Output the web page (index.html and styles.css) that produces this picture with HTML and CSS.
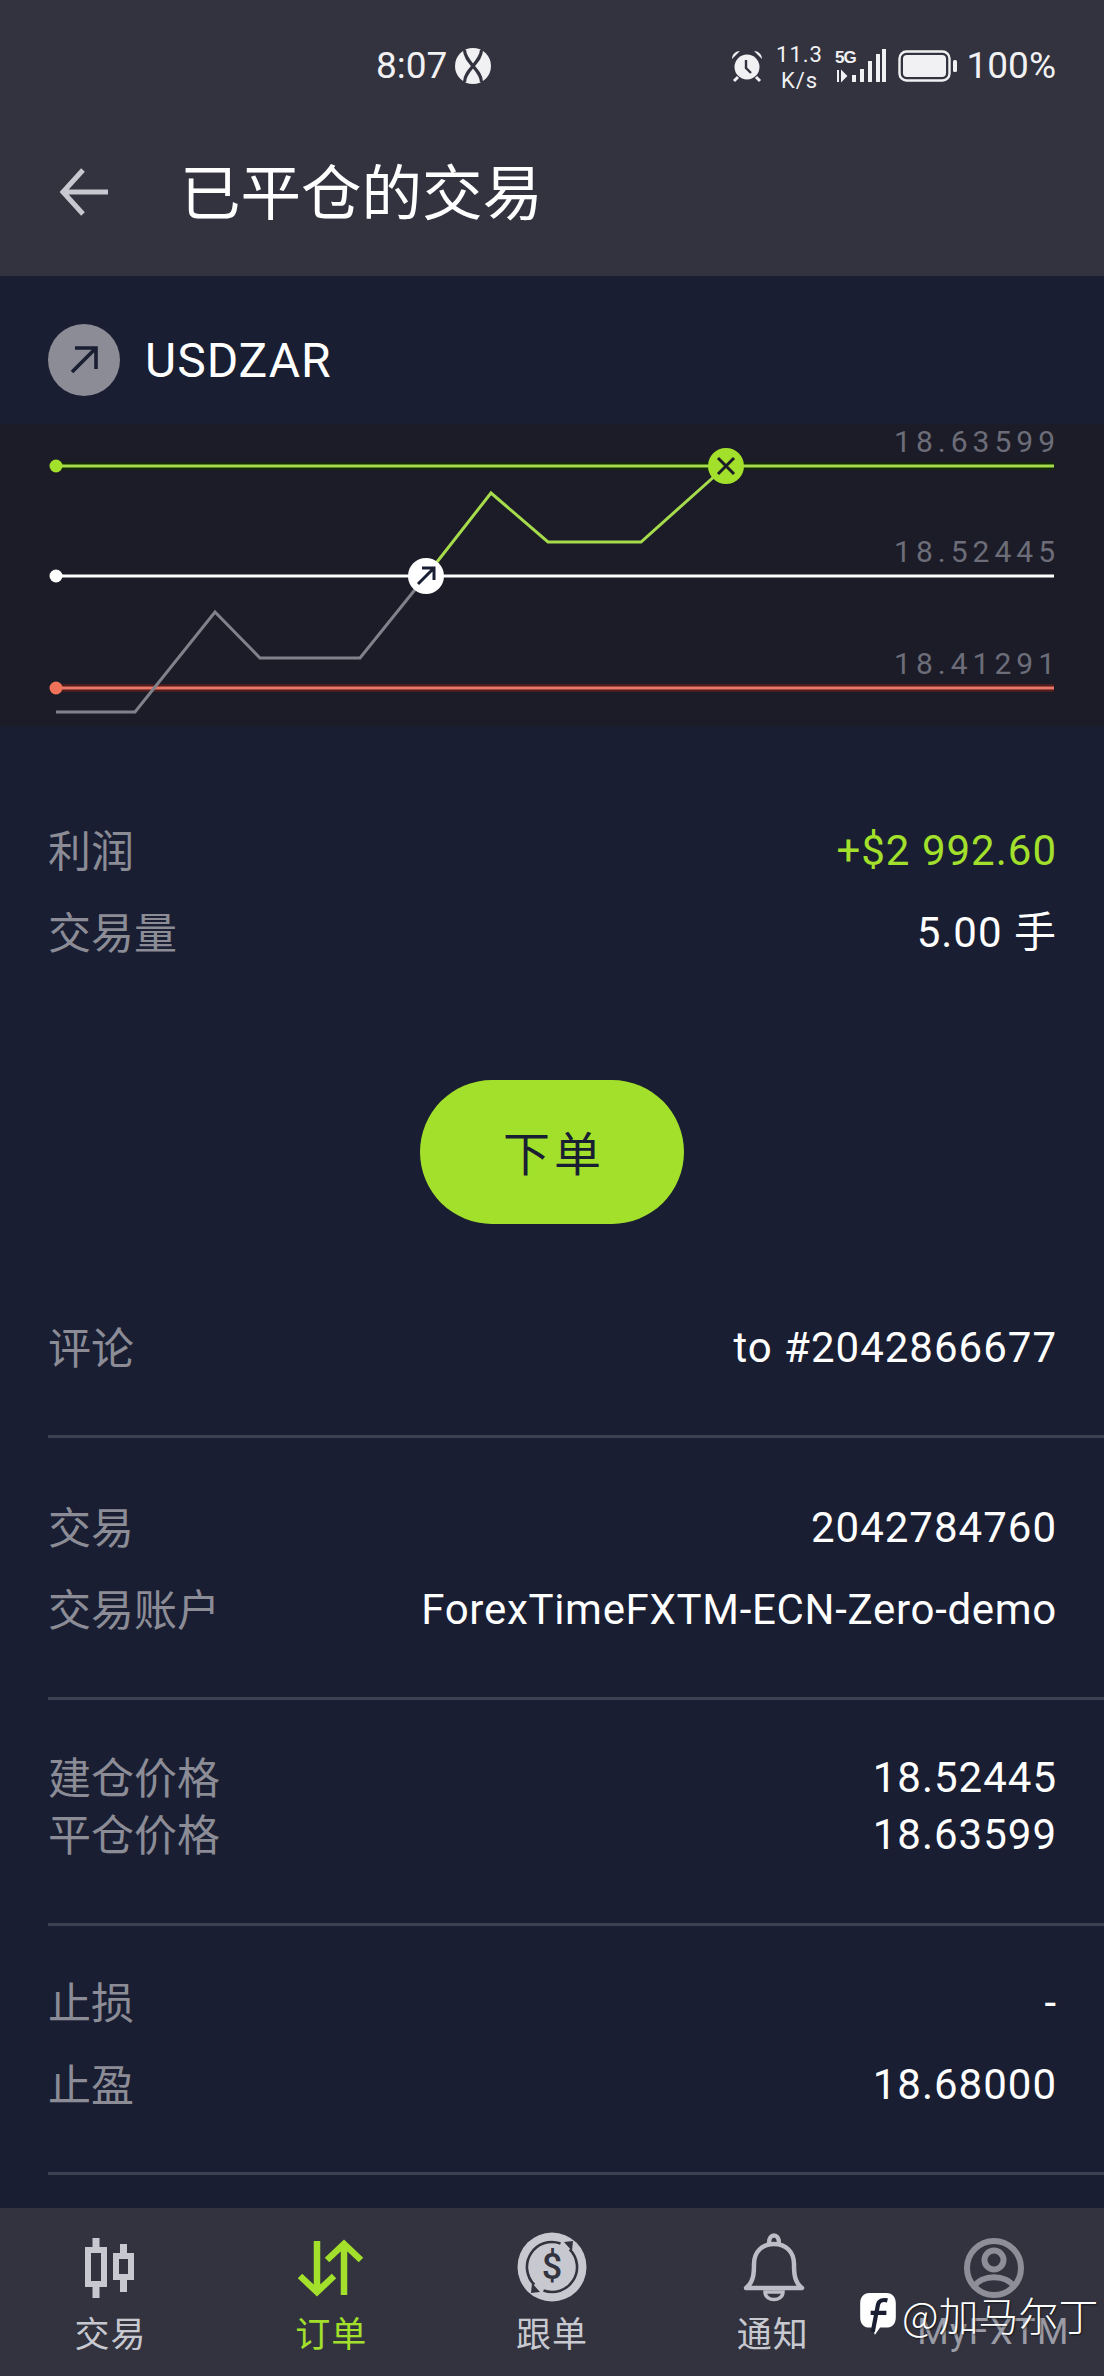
FILE: index.html
```html
<!DOCTYPE html>
<html lang="zh-CN">
<head>
<meta charset="utf-8">
<title>已平仓的交易</title>
<link rel="stylesheet" href="styles.css">
</head>
<body>
<div class="app">
  <header class="topbar">
    <div class="status">
      <div class="status-center">
        <span class="time">8:07</span>
        <svg class="status-logo" viewBox="0 0 34 34"><circle cx="17" cy="17" r="17" fill="#f1f1f3"/><path d="M9 2C9 13 25 21 25 32M25 2C25 13 9 21 9 32" fill="none" stroke="#32333f" stroke-width="3"/></svg>
      </div>
      <div class="status-right">
        <svg class="alarm" viewBox="0 0 34 34"><circle cx="17" cy="18" r="12.5" fill="#f1f1f3"/><path d="M2 10C2 5 6 2 10 2ZM32 10C32 5 28 2 24 2Z" fill="#f1f1f3"/><path d="M8 28L4 32M26 28L30 32" stroke="#f1f1f3" stroke-width="3"/><path d="M16 11V19L21 24" fill="none" stroke="#32333f" stroke-width="2.4"/></svg>
        <div class="speed"><span>11.3</span><span>K/s</span></div>
        <svg class="signal" viewBox="0 0 52 36">
          <text class="net" x="0" y="15">5G</text>
          <path d="M3 22V34M7 24L11 28L7 32Z" stroke="#f1f1f3" stroke-width="2" fill="#f1f1f3"/>
          <path d="M17 27H21V34H17ZM25 21H29V34H25ZM33 13H37V34H33ZM41 6H45V34H41Z" fill="#f1f1f3"/>
          <rect x="47" y="1" width="4" height="33" fill="#f1f1f3"/>
        </svg>
        <svg class="battery" viewBox="0 0 60 32"><rect x="1.5" y="1.5" width="50" height="29" rx="7" fill="none" stroke="#f1f1f3" stroke-width="2.4"/><rect x="5" y="5" width="43" height="22" rx="4" fill="#f1f1f3"/><rect x="55" y="10" width="4" height="12" rx="1.5" fill="#f1f1f3"/></svg>
        <span class="pct">100%</span>
      </div>
    </div>
    <div class="titlebar">
      <svg class="back" viewBox="0 0 50 50"><path d="M49 25H5M24 3L4 25L24 47" fill="none" stroke="#c8c9d0" stroke-width="5"/></svg>
      <h1 class="title">已平仓的交易</h1>
    </div>
  </header>

  <main class="content">
    <div class="symbol">
      <span class="badge"><svg viewBox="0 0 72 72"><path d="M24 48L48 24M27 24H48V45" fill="none" stroke="#191e32" stroke-width="3.6"/></svg></span>
      <span class="symbol-name">USDZAR</span>
    </div>

    <svg class="chart" viewBox="0 0 1104 303">
      <rect width="1104" height="303" fill="#1b1c27"/>
      <text class="lvl" x="1060" y="28" text-anchor="end">18.63599</text>
      <text class="lvl" x="1060" y="138" text-anchor="end">18.52445</text>
      <text class="lvl" x="1060" y="250" text-anchor="end">18.41291</text>
      <path d="M56 42H1054" stroke="#14280c" stroke-width="8"/>
      <path d="M56 42H1054" stroke="#a6dc4c" stroke-width="3"/>
      <path d="M56 152H1054" stroke="#fff" stroke-width="3"/>
      <path d="M56 264H1054" stroke="#4a1d1e" stroke-width="8"/>
      <path d="M56 264H1054" stroke="#ea7766" stroke-width="3"/>
      <circle cx="56" cy="42" r="6.5" fill="#a3e02c"/>
      <circle cx="56" cy="152" r="6.5" fill="#fff"/>
      <circle cx="56" cy="264" r="6.5" fill="#ef7259"/>
      <path d="M56 288H135L215 188L260 234H360L426 152" fill="none" stroke="#80818b" stroke-width="3"/>
      <path d="M426 152L491 69L548 118H641L726 42" fill="none" stroke="#a6dc4c" stroke-width="3"/>
      <circle cx="426" cy="152" r="18" fill="#fff"/>
      <path d="M418 160L433 145M422 144H434V156" fill="none" stroke="#191e32" stroke-width="3"/>
      <circle cx="726" cy="42" r="18" fill="#a3e02c"/>
      <path d="M718 34L734 50M734 34L718 50" fill="none" stroke="#1b1c27" stroke-width="3"/>
    </svg>

    <section class="rows profit">
      <div class="row"><span class="key">利润</span><span class="val green">+$2 992.60</span></div>
      <div class="row"><span class="key">交易量</span><span class="val">5.00 手</span></div>
    </section>

    <div class="action"><button class="order">下单</button></div>

    <section class="rows comment">
      <div class="row"><span class="key">评论</span><span class="val">to #2042866677</span></div>
    </section>

    <section class="rows deal">
      <div class="row"><span class="key">交易</span><span class="val">2042784760</span></div>
      <div class="row"><span class="key">交易账户</span><span class="val tight">ForexTimeFXTM-ECN-Zero-demo</span></div>
    </section>

    <section class="rows prices">
      <div class="row"><span class="key">建仓价格</span><span class="val">18.52445</span></div>
      <div class="row"><span class="key">平仓价格</span><span class="val">18.63599</span></div>
    </section>

    <section class="rows stops">
      <div class="row"><span class="key">止损</span><span class="val">-</span></div>
      <div class="row"><span class="key">止盈</span><span class="val">18.68000</span></div>
    </section>
  </main>

  <nav class="tabbar">
    <div class="tab">
      <svg class="tab-icon" viewBox="0 0 70 70"><g fill="none" stroke="#c8c9d0"><path d="M21 6V18M21 52V66M48.500 12V24M48.500 45V60" stroke-width="7"/><rect x="13" y="18" width="16" height="34" stroke-width="6"/><rect x="41" y="24" width="15" height="21" stroke-width="6"/></g></svg>
      <span class="tab-label">交易</span>
    </div>
    <div class="tab active">
      <svg class="tab-icon" viewBox="0 0 70 70"><path d="M21 9V60M4 44L21 60L38 44M48 63V12M31 28L48 12L65 28" fill="none" stroke="#a3e02c" stroke-width="6.500"/></svg>
      <span class="tab-label">订单</span>
    </div>
    <div class="tab">
      <svg class="tab-icon" viewBox="0 0 70 70"><circle cx="35" cy="35" r="34.500" fill="#c8c9d0"/><path d="M43.500 11.500A25 25 0 0 0 17.300 52.700M26.500 58.500A25 25 0 0 0 52.700 17.300" fill="none" stroke="#32333f" stroke-width="2.600"/><path d="M47 10L56 9L55 19ZM23 60L14 61L15 51Z" fill="#32333f"/><text class="dollar" x="35" y="47" text-anchor="middle">$</text></svg>
      <span class="tab-label">跟单</span>
    </div>
    <div class="tab">
      <svg class="tab-icon" viewBox="0 0 70 70"><path d="M8 56C16 50 16 40 16 32C16 20 24 12 36 12C48 12 56 20 56 32C56 40 56 50 64 56ZM31 11C31 1 41 1 41 11" fill="none" stroke="#bcbdc6" stroke-width="4.500" stroke-linejoin="round"/><path d="M27 60H45C45 70 27 70 27 60Z" fill="none" stroke="#bcbdc6" stroke-width="3.500"/></svg>
      <span class="tab-label">通知</span>
    </div>
    <div class="tab">
      <svg class="tab-icon" viewBox="0 0 70 70"><g fill="none" stroke="#8d8e98" stroke-width="6"><circle cx="35" cy="36" r="27"/><circle cx="35" cy="28" r="9.500"/><path d="M15 55C22 42 48 42 55 55"/></g></svg>
      <span class="tab-label muted">MyFXTM</span>
    </div>
    <div class="watermark">
      <svg class="wm-logo" viewBox="0 0 36 42"><path d="M10 1H26C32 1 35 5 35 11V24C35 31 31 34 26 34H20L15 41L13 34H10C4 34 1 30 1 24V11C1 5 4 1 10 1Z" fill="#fff"/><path d="M13 38L18 12C19 8 23 7 27 8M11 20H26" fill="none" stroke="#191e32" stroke-width="4"/></svg>
      <span class="wm-text">@加马尔丁</span>
    </div>
  </nav>
</div>
</body>
</html>
```
FILE: styles.css
```css
* { box-sizing: border-box; }
html, body { margin: 0; padding: 0; }
body {
  background: #191e32;
  font-family: Roboto, "Noto Sans CJK SC", sans-serif;
  color: #fff;
}
.app {
  width: 1104px;
  height: 2376px;
  display: flex;
  flex-direction: column;
  overflow: hidden;
}
.topbar {
  height: 276px;
  flex: none;
  background: #32333f;
  display: flex;
  flex-direction: column;
}
.status {
  height: 132px;
  padding: 41px 48px 0 376px;
  display: flex;
  justify-content: space-between;
  align-items: flex-start;
  color: #f1f1f3;
}
.status-center { display: flex; align-items: center; gap: 8px; height: 50px; }
.time { font-size: 37px; line-height: 50px; }
.status-logo { width: 36px; height: 36px; }
.status-right { display: flex; align-items: center; height: 50px; }
.alarm { width: 34px; height: 34px; margin-right: 11px; }
.speed {
  display: flex;
  flex-direction: column;
  align-items: center;
  font-size: 22px;
  line-height: 26px;
  letter-spacing: 1px;
  margin-right: 10px;
  margin-top: 4px;
  width: 50px;
}
.signal { width: 52px; height: 36px; margin-right: 11px; }
.net { font-family: "Liberation Sans", sans-serif; font-size: 17px; font-weight: 700; letter-spacing: -1px; fill: #f1f1f3; }
.battery { width: 60px; height: 32px; margin-right: 9px; }
.pct { font-size: 37px; line-height: 50px; }
.titlebar {
  display: flex;
  align-items: center;
  height: 120px;
  padding-left: 59px;
}
.back { width: 50px; height: 50px; margin-right: 71px; }
.title {
  margin: -6px 0 0;
  font-family: "Noto Sans CJK SC", sans-serif;
  font-size: 60.5px;
  font-weight: 400;
  line-height: 80px;
}
.content { flex: 1; min-height: 0; display: flex; flex-direction: column; }
.symbol {
  display: flex;
  align-items: center;
  gap: 25px;
  padding: 20px 48px 0;
  height: 148px;
  flex: none;
}
.badge { width: 72px; height: 72px; border-radius: 50%; background: #8b8c96; display: block; }
.badge svg { width: 72px; height: 72px; display: block; }
.symbol-name { font-size: 48px; letter-spacing: 1px; }
.chart { width: 1104px; height: 303px; display: block; flex: none; }
.lvl { font-family: Roboto, sans-serif; font-size: 30px; letter-spacing: 5px; fill: #6c6d78; }
.rows { margin-left: 48px; padding-right: 47px; flex: none; }
.row { display: flex; justify-content: space-between; align-items: center; }
.key { font-family: "Noto Sans CJK SC", sans-serif; font-size: 43px; line-height: 54px; margin-bottom: 6px; color: #8b8c96; }
.val { font-size: 42px; line-height: 60px; letter-spacing: 1px; color: #fff; font-family: Roboto, "Noto Sans CJK SC", sans-serif; }
.val.tight { letter-spacing: 0.7px; }
.green { color: #a3e02c; }
.profit { margin-top: 94px; display: flex; flex-direction: column; gap: 22px; }
.profit .row, .deal .row, .stops .row, .comment .row { height: 60px; }
.action { display: flex; justify-content: center; margin-top: 117px; flex: none; }
.order {
  width: 264px;
  height: 144px;
  border: 0;
  border-radius: 72px;
  background: #a3e02c;
  color: #191e32;
  font-family: "Noto Sans CJK SC", sans-serif;
  font-size: 47px;
  line-height: 60px;
  letter-spacing: 4px;
  text-indent: 4px;
  padding: 0 0 3px;
}
.comment { margin-top: 94px; height: 120px; border-bottom: 3px solid #3d4253; }
.deal { padding-top: 60px; padding-bottom: 57px; display: flex; flex-direction: column; gap: 22px; border-bottom: 3px solid #3d4253; }
.prices { padding-top: 49px; padding-bottom: 60px; display: flex; flex-direction: column; border-bottom: 3px solid #3d4253; }
.prices .row { height: 57px; }
.stops { padding-top: 47px; padding-bottom: 57px; display: flex; flex-direction: column; gap: 22px; border-bottom: 3px solid #3d4253; }
.tabbar {
  position: relative;
  height: 168px;
  flex: none;
  background: #32333f;
  display: grid;
  grid-template-columns: repeat(5, 1fr);
  padding: 24px 0 0;
}
.tab { display: flex; flex-direction: column; align-items: center; }
.tab-icon { width: 70px; height: 70px; display: block; }
.tab-label { font-family: "Noto Sans CJK SC", sans-serif; font-size: 35px; line-height: 48px; margin-top: 6px; color: #c8c9d0; letter-spacing: 1px; }
.tab-label.muted { font-family: Roboto, sans-serif; font-size: 36px; color: #9a9ba5; margin-top: 6px; letter-spacing: 1.5px; }
.active .tab-label { color: #a3e02c; }
.dollar { font-family: Roboto, sans-serif; font-size: 36px; font-weight: 500; fill: #32333f; }
.watermark {
  position: absolute;
  left: 859px;
  top: 76px;
  display: flex;
  align-items: center;
  gap: 5px;
}
.wm-logo { width: 38px; height: 44px; }
.wm-text { font-family: "Noto Sans CJK SC", sans-serif; font-size: 40px; font-weight: 300; line-height: 60px; color: #fff; white-space: nowrap; text-shadow: 1px 1px 2px rgba(0,0,0,0.6); }
```
